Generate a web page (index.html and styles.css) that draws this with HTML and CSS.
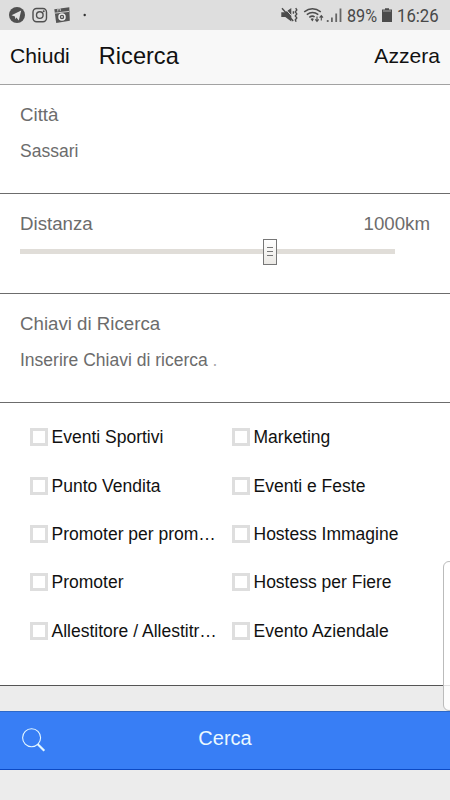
FILE: index.html
```html
<!DOCTYPE html>
<html lang="it">
<head>
<meta charset="utf-8">
<meta name="viewport" content="width=device-width">
<title>Ricerca</title>
<link rel="stylesheet" href="styles.css">
</head>
<body>
<div class="status">
  <svg class="status-left" width="90" height="30" viewBox="0 0 90 30">
    <circle cx="17" cy="15" r="8" fill="#505050"/>
    <path d="M11.5 15.3 21.2 10.6 18.8 20.4 16.4 17.4 15.2 19.2 15 16.4z" fill="#e2e2e2"/>
    <g fill="none" stroke="#505050" stroke-width="1.4">
      <rect x="33" y="8.5" width="13.5" height="13.2" rx="3.6"/>
      <circle cx="39.8" cy="15.1" r="3.3"/>
    </g>
    <circle cx="43.7" cy="11.3" r="1" fill="#505050"/>
    <path d="M54.3 9.2 69.3 7.2 69.8 20.8 56.2 22.9z" fill="#555"/>
    <path d="M54.5 13.2 69 11.4" stroke="#ddd" stroke-width=".9"/>
    <path d="M57.8 11.5V9l2.5-.4v2.5" fill="none" stroke="#ddd" stroke-width=".8"/>
    <circle cx="62" cy="16.9" r="3" fill="#555" stroke="#eee" stroke-width="1.5"/>
    <circle cx="62" cy="16.9" r=".9" fill="#eee"/>
    <circle cx="84.7" cy="15" r="1.2" fill="#333"/>
  </svg>
  <svg class="status-right" width="74" height="30" viewBox="0 0 74 30">
    <path d="M1.3 12.3h4L11.3 8v13.5l-6-4.500h-4z" fill="#4c4c4c"/>
    <path d="M4.600 8 11.600 15.800" stroke="#dedede" stroke-width="1"/>
    <path d="M2 8.200 13.200 21" stroke="#4c4c4c" stroke-width="1.400"/>
    <path d="M13.400 11.200v2.600M15.700 8.200l1.100 1.700-1.500 2 1.500 2-1.500 2 1.500 2-1.500 2 .8 1.800" fill="none" stroke="#4c4c4c" stroke-width="1.400"/>
    <g fill="none" stroke="#4c4c4c" stroke-width="1.5">
      <path d="M24.2 11.8q8.2-6.2 16.6 0M26.8 14.6q5.7-4.3 11.5 0M29.3 17.4q3.1-2.3 5.3-.4"/>
    </g>
    <path d="M30.6 18.9q1.8-1.3 3.2 0L32.4 21.5z" fill="#4c4c4c"/>
    <path d="M37 16.5v4.8M35.3 19.4l1.7 2 1.7-2M41.3 20.5v-4.8M39.6 17.7l1.7-2 1.7 2" fill="none" stroke="#4c4c4c" stroke-width="1.1"/>
    <path d="M47.7 22v-2M51.9 22v-4.5M56.2 22v-8.5M60.5 22V8.5" stroke="#666" stroke-width="1.8"/>
  </svg>
  <span class="percent">89%</span>
  <svg class="battery" width="12" height="30" viewBox="0 0 12 30">
    <path d="M4 8.2h4v1.2h3V22H1V9.4h3z" fill="#4c4c4c"/>
    <path d="M2 11h8" stroke="#999" stroke-width="1.2"/>
  </svg>
  <span class="clock">16:26</span>
</div>
<header class="header">
  <span class="action">Chiudi</span>
  <h1>Ricerca</h1>
  <span class="action right">Azzera</span>
</header>
<main>
  <section class="field city">
    <div class="label">Città</div>
    <div class="value">Sassari</div>
  </section>
  <section class="field distance">
    <div class="label split"><span>Distanza</span><span>1000km</span></div>
    <div class="track"><div class="thumb"><i></i><i></i><i></i></div></div>
  </section>
  <section class="field keys">
    <div class="label">Chiavi di Ricerca</div>
    <div class="value">Inserire Chiavi di ricerca <span class="faint">.</span></div>
  </section>
  <section class="options">
    <label class="option"><span class="box"></span><span class="name">Eventi Sportivi</span></label>
    <label class="option"><span class="box"></span><span class="name">Marketing</span></label>
    <label class="option"><span class="box"></span><span class="name">Punto Vendita</span></label>
    <label class="option"><span class="box"></span><span class="name">Eventi e Feste</span></label>
    <label class="option"><span class="box"></span><span class="name">Promoter per prom…</span></label>
    <label class="option"><span class="box"></span><span class="name">Hostess Immagine</span></label>
    <label class="option"><span class="box"></span><span class="name">Promoter</span></label>
    <label class="option"><span class="box"></span><span class="name">Hostess per Fiere</span></label>
    <label class="option"><span class="box"></span><span class="name">Allestitore / Allestitr…</span></label>
    <label class="option"><span class="box"></span><span class="name">Evento Aziendale</span></label>
  </section>
</main>
<div class="search">
  <svg width="24" height="24" viewBox="0 0 24 24" fill="none" stroke="#e4f7ff">
    <circle cx="9.6" cy="9.7" r="9" stroke-width="1.1"/>
    <path d="M15.5 16 22.3 22.7" stroke-width="2.2"/>
  </svg>
  <span class="caption">Cerca</span>
</div>
<div class="edge"></div>
</body>
</html>
```

FILE: styles.css
```css
* { box-sizing: border-box; }

body {
  margin: 0;
  width: 450px;
  height: 800px;
  overflow: hidden;
  position: relative;
  background: #ececec;
  font-family: "Liberation Sans", Arial, sans-serif;
  color: #111;
}

.status {
  height: 30px;
  display: flex;
  align-items: center;
  background: #dedede;
  color: #484848;
  font: 18px/30px Roboto, sans-serif;
}

.status-right { margin-left: 190px; }

.percent, .clock {
  display: block;
  transform-origin: left center;
  white-space: nowrap;
  padding-top: 1px;
}

.percent { width: 34px; margin-left: -7px; transform: scaleX(.9); }
.clock { margin-left: 4px; transform: scaleX(.93); }

.header {
  height: 55px;
  display: flex;
  align-items: center;
  padding: 0 10px 2px;
  background: #f8f8f8;
  border-bottom: 1px solid #a2a2a2;
}

.header h1 {
  margin: 0 0 0 29px;
  font-size: 23.6px;
  font-weight: 400;
}

.action { font-size: 21.1px; padding-bottom: 1px; }
.right { margin-left: auto; }

.field {
  background: #fff;
  border-bottom: 1px solid #6c6c6c;
  padding: 18px 20px 0;
  color: #6c6c6c;
}

.city { height: 109px; }
.distance { height: 100px; }
.keys { height: 109px; }

.label { font-size: 18.7px; line-height: 24px; }
.value { font-size: 17.5px; line-height: 24px; margin-top: 12px; white-space: pre; }
.split { display: flex; justify-content: space-between; }
.faint { color: #aaa; }

.track {
  width: 375px;
  height: 5px;
  margin-top: 13px;
  background: #e0ddd8;
  display: flex;
  align-items: center;
  padding-left: 243px;
}

.thumb {
  flex: none;
  width: 14px;
  height: 26px;
  border: 1px solid #777;
  background: linear-gradient(#fff, #ebe9e5);
  display: flex;
  flex-direction: column;
  align-items: center;
  justify-content: center;
  gap: 3px;
}

.thumb i { width: 6px; height: 1px; background: #777; }

.options {
  height: 283px;
  padding: 10px 30px 0;
  background: #fff;
  border-bottom: 1px solid #555;
  display: grid;
  grid-template-columns: 202px 188px;
  grid-auto-rows: 48.4px;
}

.option {
  display: flex;
  align-items: center;
  gap: 3.5px;
  font-size: 17.5px;
  white-space: nowrap;
}

.box {
  width: 18px;
  height: 18px;
  border: 3px solid #dedede;
}

.name { padding-top: 1px; }

.search {
  height: 59px;
  margin-top: 25px;
  display: grid;
  grid-template-columns: 24px 1fr 24px;
  align-items: center;
  padding: 0 22px 2px;
  background: #387ef5;
  border-top: 1px solid #2d68c8;
  border-bottom: 1px solid #0c49c4;
  color: #eaf8ff;
  text-align: center;
}

.caption { font-size: 20px; padding-bottom: 2px; }

.edge {
  position: absolute;
  left: 443px;
  top: 561px;
  width: 12px;
  height: 150px;
  border: 1px solid #bbb;
  border-radius: 7px;
  background: rgba(255, 255, 255, .82);
}
```
